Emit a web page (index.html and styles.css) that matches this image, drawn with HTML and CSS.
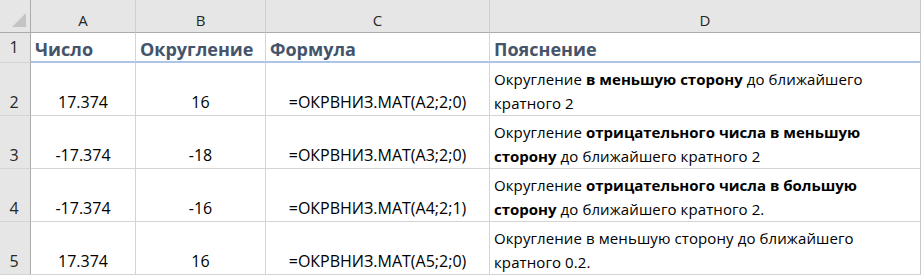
FILE: index.html
```html
<!DOCTYPE html>
<html lang="ru">
<head>
<meta charset="utf-8">
<title>ОКРВНИЗ.МАТ</title>
<link rel="stylesheet" href="styles.css">
</head>
<body>
<div class="sheet">
  <div class="corner"><svg class="tri" width="14" height="14" viewBox="0 0 14 14"><polygon points="14,0 14,14 0,14" fill="#c4c4c4"/></svg></div>
  <div class="colhead">A</div>
  <div class="colhead">B</div>
  <div class="colhead">C</div>
  <div class="colhead last">D</div>

  <div class="rowhead r1">1</div>
  <div class="cell head">Число</div>
  <div class="cell head">Округление</div>
  <div class="cell head">Формула</div>
  <div class="cell head last">Пояснение</div>

  <div class="rowhead">2</div>
  <div class="cell num">17.374</div>
  <div class="cell num">16</div>
  <div class="cell num">=ОКРВНИЗ.МАТ(A2;2;0)</div>
  <div class="cell text last"><p>Округление <b>в меньшую сторону</b> до ближайшего кратного 2</p></div>

  <div class="rowhead">3</div>
  <div class="cell num">-17.374</div>
  <div class="cell num">-18</div>
  <div class="cell num">=ОКРВНИЗ.МАТ(A3;2;0)</div>
  <div class="cell text last"><p>Округление <b>отрицательного числа в меньшую сторону</b> до ближайшего кратного 2</p></div>

  <div class="rowhead">4</div>
  <div class="cell num">-17.374</div>
  <div class="cell num">-16</div>
  <div class="cell num">=ОКРВНИЗ.МАТ(A4;2;1)</div>
  <div class="cell text last"><p>Округление <b>отрицательного числа в большую сторону</b> до ближайшего кратного 2.</p></div>

  <div class="rowhead">5</div>
  <div class="cell num">17.374</div>
  <div class="cell num">16</div>
  <div class="cell num">=ОКРВНИЗ.МАТ(A5;2;0)</div>
  <div class="cell text last"><p>Округление в меньшую сторону до ближайшего кратного 0.2.</p></div>
</div>
</body>
</html>
```
FILE: styles.css
```css
* { box-sizing: border-box; }
html, body { margin: 0; padding: 0; background: #fff; }
body { font-family: "Open Sans", "Noto Sans", sans-serif; color: #000; }

.sheet {
  display: grid;
  grid-template-columns: 31px 105px 130px 224px 431px;
  grid-template-rows: 33px 30px 53px 53px 53px 53px;
  width: 921px;
  font-size: 15px;
}

.corner {
  background: #e6e6e6;
  border-right: 1px solid #ababab;
  border-bottom: 1px solid #ababab;
  display: flex;
  align-items: flex-end;
  justify-content: flex-end;
  padding: 0 4px 5px 0;
}
.tri { display: block; }

.colhead {
  background: #e6e6e6;
  border-right: 1px solid #d0d0d0;
  border-bottom: 1px solid #ababab;
  display: flex;
  align-items: center;
  justify-content: center;
  padding-top: 7px;
  color: #262626;
  font-size: 15px;
}
.colhead.last { border-right-color: #c8c8c8; }

.rowhead {
  background: #e6e6e6;
  border-right: 1px solid #ababab;
  border-bottom: 1px solid #d4d4d4;
  display: flex;
  align-items: flex-end;
  justify-content: center;
  padding: 0 2px 1px 0;
  line-height: 24px;
  color: #262626;
  font-size: 16px;
}
.rowhead.r1 { padding-bottom: 3px; }

.cell {
  border-right: 1px solid #d4d4d4;
  border-bottom: 1px solid #d4d4d4;
  display: flex;
  align-items: flex-end;
  line-height: 24px;
  padding: 0 4px 1px;
  white-space: nowrap;
}
.cell.last { border-right-color: #c8c8c8; }

.head {
  border-bottom: 2px solid #adc4e6;
  font-weight: 700;
  color: #44546a;
  font-size: 18px;
  padding-bottom: 0;
}

.num { justify-content: center; font-size: 16px; }

.text { white-space: normal; padding-bottom: 0; letter-spacing: 0.1px; }
.text p { margin: 0; }
.text b { font-weight: 700; letter-spacing: 0; }
```
